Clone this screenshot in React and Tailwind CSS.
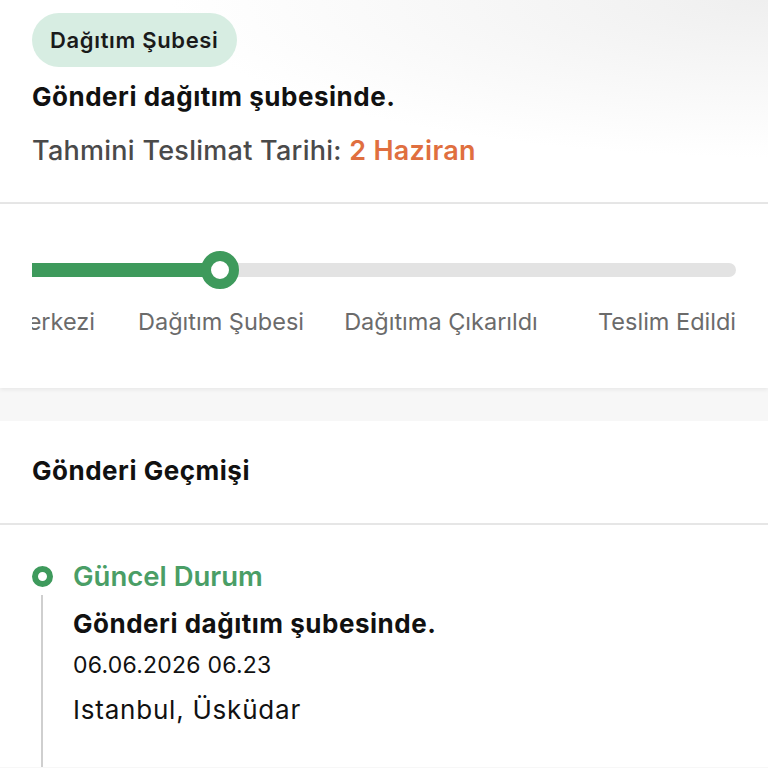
const steps = [
  { label: "Kargo Kabul", cell: "w-[220px] text-center" },
  { label: "Transfer Merkezi", cell: "w-[220px] text-center" },
  { label: "Dağıtım Şubesi", cell: "w-[220px] text-center" },
  { label: "Dağıtıma Çıkarıldı", cell: "w-[220px] text-center" },
  { label: "Teslim Edildi", cell: "w-[185px] text-right" }
];

function App() {
  return (
    <div className="min-h-screen bg-[#f7f7f7] font-['Inter',sans-serif] text-[#111]">
      <section className="bg-white bg-[radial-gradient(ellipse_at_top_right,#efefef_0%,#ffffff_55%)] px-8 pt-[13px] pb-[33px] border-b-2 border-[#e6e6e6]">
        <span className="inline-flex h-[54px] items-center rounded-full bg-[#d7ede2] px-[18px] text-[22px] font-semibold tracking-[0.03em] text-[#1a1a1a]">
          Dağıtım Şubesi
        </span>
        <h1 className="mt-[13px] text-[26px] font-bold leading-[34px] tracking-[0.02em]">
          Gönderi dağıtım şubesinde.
        </h1>
        <p className="mt-[19px] text-[27px] font-medium leading-[36px] tracking-[0.01em] text-[#4a4a4a]">
          Tahmini Teslimat Tarihi:{" "}
          <span className="font-semibold text-[#e06f3f]">2 Haziran</span>
        </p>
      </section>

      <section className="relative z-10 bg-white px-8 pt-[47px] pb-[50px] shadow-[0_2px_4px_rgba(0,0,0,0.06)]">
        <div className="relative flex h-[38px] items-center">
          <div className="h-[14px] w-full rounded-r-full bg-[#e3e3e3]">
            <div className="h-full w-[188px] bg-[#3e9a5c]" />
          </div>
          <div className="absolute left-[169px] top-0 h-[38px] w-[38px] rounded-full border-[10px] border-[#3e9a5c] bg-white" />
        </div>
        <div className="mt-[17px] flex justify-end overflow-hidden text-[23.5px] leading-[32px] text-[#6b6b6b] whitespace-nowrap">
          {steps.map((s) => (
            <span key={s.label} className={"shrink-0 " + s.cell}>
              {s.label}
            </span>
          ))}
        </div>
      </section>

      <div className="h-[33px]" />

      <section className="bg-white">
        <div className="border-b-2 border-[#e6e6e6] px-8 pt-[33px] pb-[35px]">
          <h2 className="text-[26px] font-bold leading-[34px] tracking-[0.02em]">Gönderi Geçmişi</h2>
        </div>
        <div className="relative px-8 pt-[33px] pb-10">
          <div className="absolute left-[41px] top-[70px] bottom-0 w-[2px] bg-[#cfcfcf]" />
          <div className="flex h-[36px] items-center gap-[20px]">
            <span className="h-[21px] w-[21px] shrink-0 rounded-full border-[6px] border-[#3e9a5c] bg-white" />
            <span className="text-[27.5px] font-semibold leading-[36px] text-[#4a9e66]">
              Güncel Durum
            </span>
          </div>
          <div className="pl-[41px]">
            <p className="mt-[13px] text-[26px] font-bold leading-[34px] tracking-[0.02em]">
              Gönderi dağıtım şubesinde.
            </p>
            <p className="mt-[8px] text-[23px] leading-[32px] tracking-[0.01em]">06.06.2026 06.23</p>
            <p className="mt-[12px] text-[26px] leading-[34px] tracking-[0.03em]">Istanbul, Üsküdar</p>
          </div>
        </div>
      </section>
    </div>
  );
}

export default App;
